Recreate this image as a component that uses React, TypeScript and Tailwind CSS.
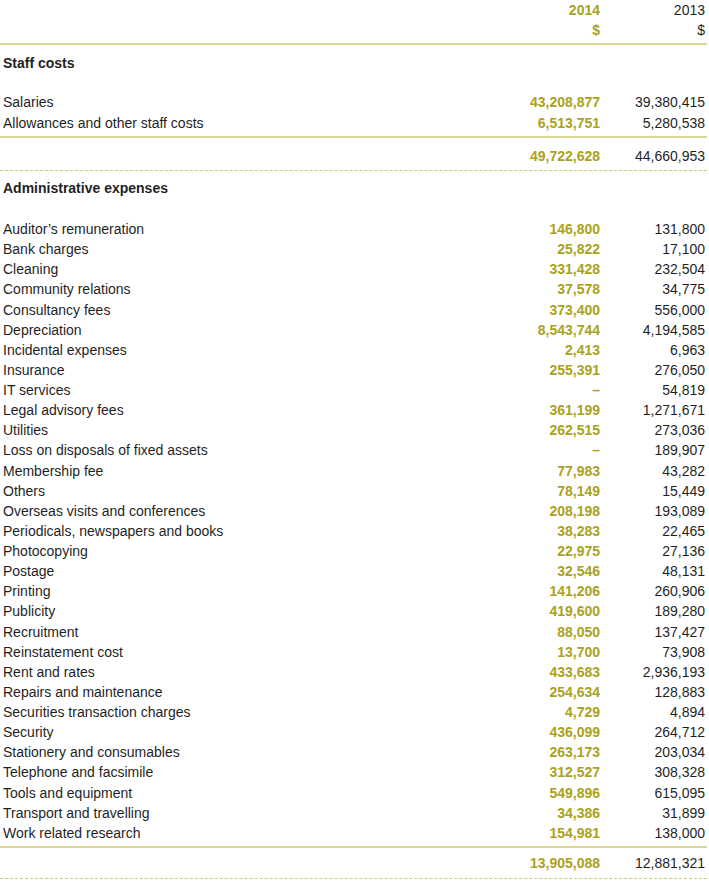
const staff: [string, string, string][] = [
  ["Salaries", "43,208,877", "39,380,415"],
  ["Allowances and other staff costs", "6,513,751", "5,280,538"],
];

const admin: [string, string, string][] = [
  ["Auditor\u2019s remuneration", "146,800", "131,800"],
  ["Bank charges", "25,822", "17,100"],
  ["Cleaning", "331,428", "232,504"],
  ["Community relations", "37,578", "34,775"],
  ["Consultancy fees", "373,400", "556,000"],
  ["Depreciation", "8,543,744", "4,194,585"],
  ["Incidental expenses", "2,413", "6,963"],
  ["Insurance", "255,391", "276,050"],
  ["IT services", "\u2013", "54,819"],
  ["Legal advisory fees", "361,199", "1,271,671"],
  ["Utilities", "262,515", "273,036"],
  ["Loss on disposals of fixed assets", "\u2013", "189,907"],
  ["Membership fee", "77,983", "43,282"],
  ["Others", "78,149", "15,449"],
  ["Overseas visits and conferences", "208,198", "193,089"],
  ["Periodicals, newspapers and books", "38,283", "22,465"],
  ["Photocopying", "22,975", "27,136"],
  ["Postage", "32,546", "48,131"],
  ["Printing", "141,206", "260,906"],
  ["Publicity", "419,600", "189,280"],
  ["Recruitment", "88,050", "137,427"],
  ["Reinstatement cost", "13,700", "73,908"],
  ["Rent and rates", "433,683", "2,936,193"],
  ["Repairs and maintenance", "254,634", "128,883"],
  ["Securities transaction charges", "4,729", "4,894"],
  ["Security", "436,099", "264,712"],
  ["Stationery and consumables", "263,173", "203,034"],
  ["Telephone and facsimile", "312,527", "308,328"],
  ["Tools and equipment", "549,896", "615,095"],
  ["Transport and travelling", "34,386", "31,899"],
  ["Work related research", "154,981", "138,000"],
];

function Row({ label, a, b, h = "h-5" }: { label: string; a: string; b: string; h?: string }) {
  return (
    <div className={`flex items-center ${h}`}>
      <div className="flex-1 pl-[3px] text-[#1f1f1f]">{label}</div>
      <div className="text-right font-bold text-[#aaa21c]">{a}</div>
      <div className="w-[105px] text-right text-[#1f1f1f]">{b}</div>
    </div>
  );
}

function Solid() {
  return <div className="h-[2px] bg-[#dcd890]" />;
}

function Dashed() {
  return <div className="border-t-[1.5px] border-dashed border-[#d2ca6c]" />;
}

export default function App() {
  return (
    <div
      className="w-[709px] bg-white text-[14px] leading-5"
      style={{ fontFamily: '"Liberation Sans", Arial, sans-serif' }}
    >
      <div className="pr-[4px]">
        <Row label="" a="2014" b="2013" />
        <Row label="" a="$" b="$" />
      </div>
      <div className="mt-[3px] pr-[2px]">
        <Solid />
      </div>
      <div className="mt-[8px] h-5 pl-[3px] font-bold text-[#1f1f1f] flex items-center">Staff costs</div>
      <div className="mt-[19px] pr-[4px]">
        {staff.map(([l, a, b]) => (
          <Row key={l} label={l} a={a} b={b} h="h-[20.5px]" />
        ))}
      </div>
      <div className="mt-[3px] pr-[2px]">
        <Solid />
      </div>
      <div className="mt-[8px] pr-[4px]">
        <Row label="" a="49,722,628" b="44,660,953" />
      </div>
      <div className="mt-[4px] pr-[2px]">
        <Dashed />
      </div>
      <div className="mt-[7px] h-5 pl-[3px] font-bold text-[#1f1f1f] flex items-center">
        Administrative expenses
      </div>
      <div className="mt-[21px] pr-[4px]">
        {admin.map(([l, a, b]) => (
          <Row key={l} label={l} a={a} b={b} h="h-[20.13px]" />
        ))}
      </div>
      <div className="mt-[3px] pr-[2px]">
        <Solid />
      </div>
      <div className="mt-[5px] pr-[4px]">
        <Row label="" a="13,905,088" b="12,881,321" />
      </div>
      <div className="mt-[5px] pr-[2px]">
        <Dashed />
      </div>
    </div>
  );
}
